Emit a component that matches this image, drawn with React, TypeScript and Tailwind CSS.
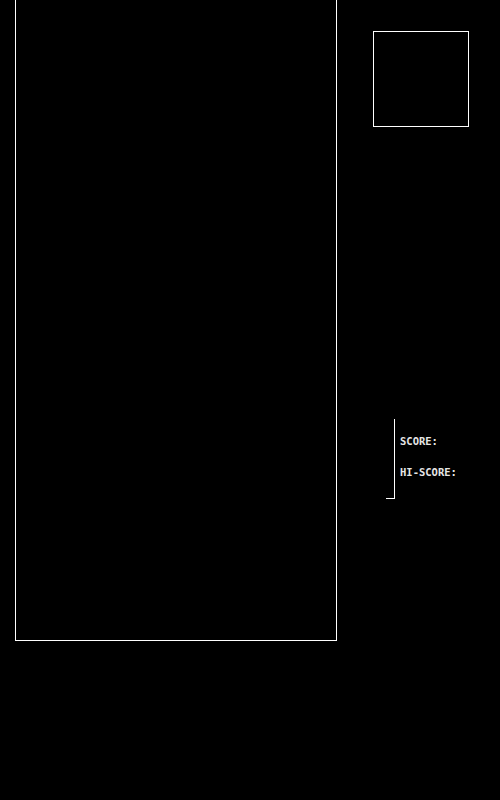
import React from 'react';

// score rows
const rows = ['SCORE:', 'HI-SCORE:'];

// tetris-like layout
const App: React.FC = () => {
	return (
		<div className="flex h-[800px] w-[500px] overflow-hidden bg-black">
			{/* board */}
			<div className="ml-[15px] mt-[-1px] h-[642px] w-[322px] shrink-0 border border-white" />

			{/* side column */}
			<div className="ml-[36px] flex flex-col">
				{/* next piece */}
				<div className="mt-[31px] h-[96px] w-[96px] border border-white" />

				{/* score panel */}
				<div className="mt-[292px] ml-[13px] flex items-end">
					<div className="h-px w-[8px] bg-white" />
					<div className="flex h-[80px] flex-col gap-[20px] border-l border-white pl-[5px] pt-[17px] font-['DejaVu_Sans_Mono',monospace] text-[10.5px] font-bold leading-[11px] text-[#e6e6e6]">
						{rows.map((label) => (
							<span key={label}>{label}</span>
						))}
					</div>
				</div>
			</div>
		</div>
	);
};

export default App;
